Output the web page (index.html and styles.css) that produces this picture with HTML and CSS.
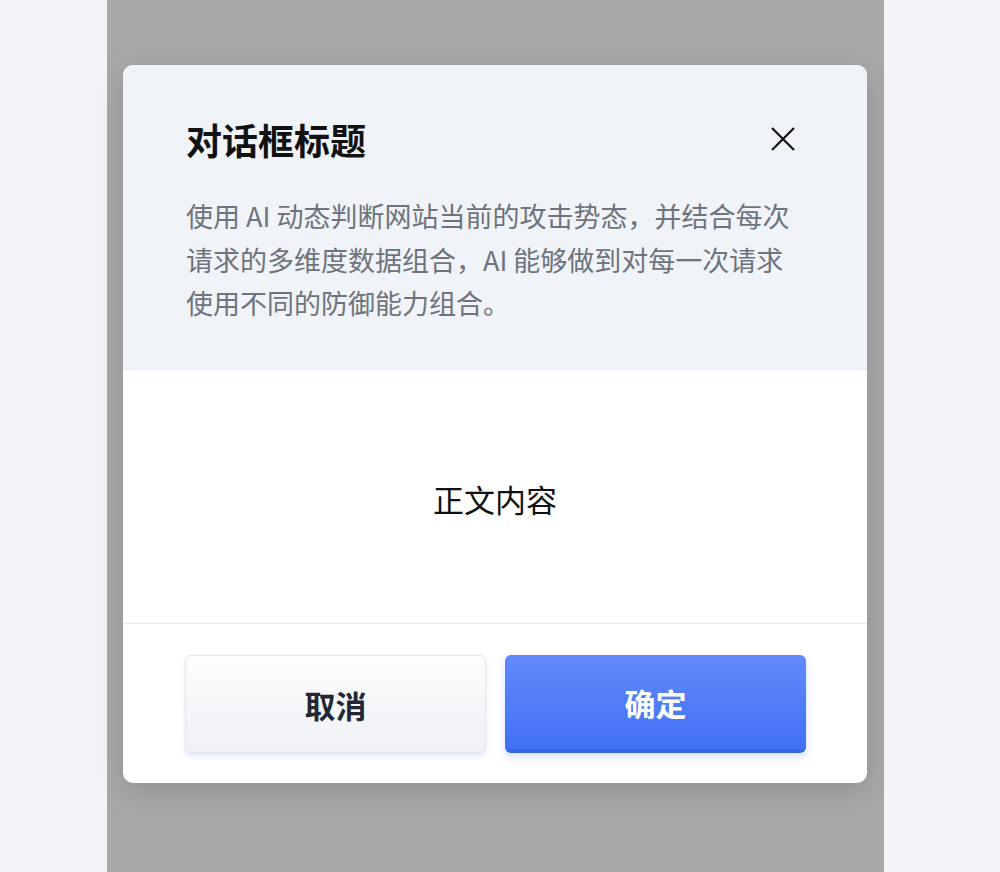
FILE: index.html
```html
<!DOCTYPE html>
<html lang="zh-CN">
<head>
<meta charset="utf-8">
<title>对话框</title>
<link rel="stylesheet" href="styles.css">
</head>
<body>
<div class="stage">
  <div class="dialog">
    <div class="dialog-header">
      <div class="title-row">
        <h1 class="title">对话框标题</h1>
        <button class="close" aria-label="关闭">
          <svg width="24" height="24" viewBox="0 0 24 24"><path d="M1 1 L23 23 M23 1 L1 23" stroke="#111" stroke-width="2.2" fill="none"/></svg>
        </button>
      </div>
      <p class="desc">使用 AI 动态判断网站当前的攻击势态，并结合每次请求的多维度数据组合，AI 能够做到对每一次请求使用不同的防御能力组合。</p>
    </div>
    <div class="dialog-body">正文内容</div>
    <div class="dialog-footer">
      <button class="btn btn-cancel">取消</button>
      <button class="btn btn-ok">确定</button>
    </div>
  </div>
</div>
</body>
</html>
```

FILE: styles.css
```css
* { box-sizing: border-box; }
html, body { margin: 0; padding: 0; }
body {
  background: #f3f4f8;
  font-family: "Noto Sans CJK SC", "Noto Sans", sans-serif;
  height: 872px;
  overflow: hidden;
}
.stage {
  width: 777px;
  height: 872px;
  margin-left: 107px;
  background: #a8a8a8;
  padding: 65px 17px 0 16px;
}
.dialog {
  width: 744px;
  background: #fff;
  border-radius: 10px;
  overflow: hidden;
  box-shadow: 0 8px 28px rgba(0, 0, 0, 0.14);
}
.dialog-header {
  background: #f0f3f8;
  padding: 52px 62px 47px 63px;
  height: 306px;
}
.title-row {
  display: flex;
  align-items: center;
  justify-content: space-between;
  padding-right: 10px;
  height: 44px;
}
.title {
  margin: 0;
  font-size: 36px;
  font-weight: 700;
  color: #111;
  line-height: 44px;
}
.close {
  border: 0;
  background: none;
  padding: 0;
  width: 24px;
  height: 24px;
  display: flex;
}
.desc {
  margin: 33px 0 0;
  font-size: 27px;
  line-height: 43.5px;
  color: #6e737d;
}
.dialog-body {
  height: 253px;
  display: flex;
  align-items: center;
  justify-content: center;
  font-size: 31px;
  color: #111;
  border-bottom: 1px solid #e6e8ee;
  padding-top: 2px;
}
.dialog-footer {
  display: grid;
  grid-template-columns: 1fr 1fr;
  gap: 19px;
  padding: 31px 61px 30px 62px;
}
.btn {
  height: 98px;
  padding: 0;
  border-radius: 6px;
  font-family: inherit;
  font-size: 31px;
  font-weight: 700;
  cursor: pointer;
}
.btn-cancel {
  background: linear-gradient(#fdfdfe, #f0f1f6);
  border: 1px solid #e2e5ee;
  color: #222833;
  box-shadow: 0 3px 6px rgba(70, 100, 200, 0.14);
}
.btn-ok {
  background: linear-gradient(#6189fa, #4271f5);
  border: 0;
  border-bottom: 4px solid #3866e6;
  color: #fff;
  box-shadow: 0 4px 8px rgba(66, 114, 245, 0.22);
}
```
